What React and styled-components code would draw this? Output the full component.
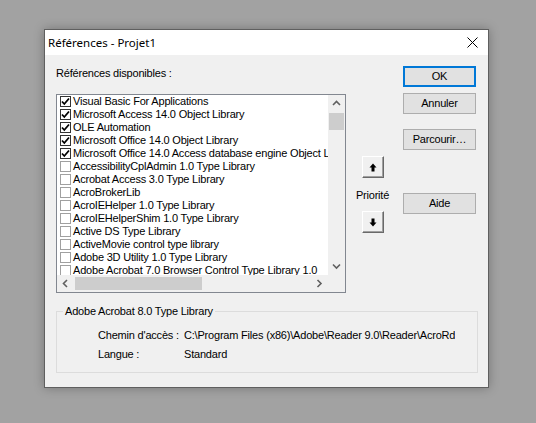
import React from 'react';
import styled, { createGlobalStyle } from 'styled-components';

const GlobalStyle = createGlobalStyle`
  html, body {
    margin: 0;
    padding: 0;
    background: #a2a2a2;
  }
  body {
    font-family: "Liberation Sans", Arial, sans-serif;
    font-size: 11px;
    letter-spacing: -0.2px;
    color: #000;
  }
`;

const Page = styled.div`
  width: 536px;
  height: 423px;
  padding: 29px 0 0 44px;
  box-sizing: border-box;
`;

const Dialog = styled.div`
  width: 445px;
  height: 359px;
  box-sizing: border-box;
  border: 1px solid #5f5f5f;
  background: #f0f0f0;
  box-shadow: 0 0 10px rgba(0, 0, 0, 0.28);
  display: flex;
  flex-direction: column;
`;

const TitleBar = styled.div`
  height: 25px;
  background: #fff;
  display: flex;
  align-items: center;
  justify-content: space-between;
  padding: 0 10px 0 3px;
  flex-shrink: 0;
`;

const Title = styled.span`
  font-family: "Noto Sans", "Open Sans", sans-serif;
  font-size: 11.5px;
  letter-spacing: 0;
  line-height: 15px;
  margin-top: -1px;
`;

const CloseIcon = styled.svg`
  width: 11px;
  height: 11px;
  display: block;
`;

const Body = styled.div`
  padding: 0 10px 0 11px;
`;

const Top = styled.div`
  display: flex;
`;

const LeftCol = styled.div`
  width: 290px;
  padding-top: 11px;
`;

const Label = styled.div`
  line-height: 15px;
  height: 15px;
  white-space: nowrap;
`;

const ListBox = styled.div`
  margin-top: 13px;
  height: 199px;
  box-sizing: border-box;
  border: 1px solid #828790;
  background: #fff;
  display: grid;
  grid-template-columns: 1fr 17px;
  grid-template-rows: 1fr 17px;
  overflow: hidden;
`;

const Items = styled.div`
  overflow: hidden;
  padding: 0 0 0 3px;
`;

const Item = styled.div`
  height: 13px;
  line-height: 13px;
  display: flex;
  align-items: center;
  white-space: nowrap;
`;

const Check = styled.span`
  width: 11px;
  height: 11px;
  box-sizing: border-box;
  border: 1px solid ${(p) => (p.$on ? '#333' : '#a0a0a0')};
  background: #fff;
  margin-right: 2px;
  flex-shrink: 0;
  display: flex;
  align-items: center;
  justify-content: center;
`;

const ItemText = styled.span`
  line-height: 13px;
`;

const VScroll = styled.div`
  background: #f0f0f0;
  display: flex;
  flex-direction: column;
`;

const HScroll = styled.div`
  background: #f0f0f0;
  display: flex;
  align-items: stretch;
`;

const Corner = styled.div`
  background: #f0f0f0;
`;

const Arrow = styled.div`
  width: 17px;
  height: 17px;
  flex-shrink: 0;
  display: flex;
  align-items: center;
  justify-content: center;
`;

const VThumb = styled.div`
  margin: 1px 1px 0;
  height: 17px;
  background: #cdcdcd;
`;

const Track = styled.div`
  flex: 1;
`;

const HThumb = styled.div`
  margin: 2px 0 2px 1px;
  width: 127px;
  background: #cdcdcd;
`;

const MidCol = styled.div`
  width: 57px;
  padding-top: 101px;
  padding-right: 4px;
  box-sizing: border-box;
  display: flex;
  flex-direction: column;
  align-items: center;
`;

const MoveButton = styled.div`
  width: 22px;
  height: 22px;
  box-sizing: border-box;
  background: #f0f0f0;
  border: 1px solid;
  border-color: #fff #696969 #696969 #fff;
  box-shadow: inset -1px -1px 0 #a0a0a0;
  display: flex;
  align-items: center;
  justify-content: center;
  margin-top: ${(p) => p.$gap || 0}px;
`;

const Priority = styled.div`
  margin-top: 10px;
  line-height: 15px;
`;

const RightCol = styled.div`
  width: 73px;
  padding-top: 11px;
  display: flex;
  flex-direction: column;
`;

const Button = styled.div`
  height: 21px;
  box-sizing: border-box;
  background: #e1e1e1;
  border: ${(p) => (p.$default ? '2px solid #0078d7' : '1px solid #adadad')};
  display: flex;
  align-items: center;
  justify-content: center;
  line-height: 15px;
  margin-top: ${(p) => p.$gap || 0}px;
`;

const Group = styled.fieldset`
  margin: 11px 0 0;
  width: 422px;
  box-sizing: border-box;
  border: 1px solid #dcdcdc;
  padding: 9px 0 6px 6px;
  min-width: 0;
`;

const Legend = styled.legend`
  padding: 0 2px;
  line-height: 15px;
`;

const Info = styled.div`
  padding-left: 35px;
`;

const InfoRow = styled.div`
  display: flex;
  height: 19px;
  line-height: 15px;
  white-space: nowrap;
`;

const InfoLabel = styled.span`
  width: 86px;
  flex-shrink: 0;
`;

const InfoValue = styled.span`
  width: 271px;
  overflow: hidden;
`;

const items = [
  ['Visual Basic For Applications', true],
  ['Microsoft Access 14.0 Object Library', true],
  ['OLE Automation', true],
  ['Microsoft Office 14.0 Object Library', true],
  ['Microsoft Office 14.0 Access database engine Object Library', true],
  ['AccessibilityCplAdmin 1.0 Type Library', false],
  ['Acrobat Access 3.0 Type Library', false],
  ['AcroBrokerLib', false],
  ['AcroIEHelper 1.0 Type Library', false],
  ['AcroIEHelperShim 1.0 Type Library', false],
  ['Active DS Type Library', false],
  ['ActiveMovie control type library', false],
  ['Adobe 3D Utility 1.0 Type Library', false],
  ['Adobe Acrobat 7.0 Browser Control Type Library 1.0', false],
  ['Adobe Acrobat 8.0 Type Library', false],
];

const Tick = () => (
  <svg width="9" height="9" viewBox="0 0 9 9">
    <path d="M1 4.5 L3.3 7 L8 1.5" fill="none" stroke="#000" strokeWidth="1.8" />
  </svg>
);

const Chevron = ({ dir }) => {
  const paths = {
    up: 'M1 5 L4.5 1.5 L8 5',
    down: 'M1 1.5 L4.5 5 L8 1.5',
    left: 'M5 1 L1.5 4.5 L5 8',
    right: 'M1.5 1 L5 4.5 L1.5 8',
  };
  const vertical = dir === 'up' || dir === 'down';
  return (
    <svg
      width={vertical ? 9 : 7}
      height={vertical ? 7 : 9}
      viewBox={vertical ? '0 0 9 7' : '0 0 7 9'}
    >
      <path d={paths[dir]} fill="none" stroke="#606060" strokeWidth="1.6" />
    </svg>
  );
};

const BlackArrow = ({ down }) => (
  <svg width="8" height="9" viewBox="0 0 8 9" style={down ? { transform: 'rotate(180deg)' } : undefined}>
    <path d="M4 0.5 L7.5 4.5 L5.5 4.5 L5.5 8.5 L2.5 8.5 L2.5 4.5 L0.5 4.5 Z" fill="#000" />
  </svg>
);

export default function App() {
  return (
    <>
      <GlobalStyle />
      <Page>
        <Dialog>
          <TitleBar>
            <Title>Références - Projet1</Title>
            <CloseIcon viewBox="0 0 11 11">
              <path d="M0.5 0.5 L10.5 10.5 M10.5 0.5 L0.5 10.5" stroke="#000" strokeWidth="1" />
            </CloseIcon>
          </TitleBar>
          <Body>
            <Top>
              <LeftCol>
                <Label>Références disponibles :</Label>
                <ListBox>
                  <Items>
                    {items.map(([name, on]) => (
                      <Item key={name}>
                        <Check $on={on}>{on && <Tick />}</Check>
                        <ItemText>{name}</ItemText>
                      </Item>
                    ))}
                  </Items>
                  <VScroll>
                    <Arrow>
                      <Chevron dir="up" />
                    </Arrow>
                    <VThumb />
                    <Track />
                    <Arrow>
                      <Chevron dir="down" />
                    </Arrow>
                  </VScroll>
                  <HScroll>
                    <Arrow>
                      <Chevron dir="left" />
                    </Arrow>
                    <HThumb />
                    <Track />
                    <Arrow>
                      <Chevron dir="right" />
                    </Arrow>
                  </HScroll>
                  <Corner />
                </ListBox>
              </LeftCol>
              <MidCol>
                <MoveButton>
                  <BlackArrow />
                </MoveButton>
                <Priority>Priorité</Priority>
                <MoveButton $gap={8}>
                  <BlackArrow down />
                </MoveButton>
              </MidCol>
              <RightCol>
                <Button $default>OK</Button>
                <Button $gap={6}>Annuler</Button>
                <Button $gap={15}>Parcourir…</Button>
                <Button $gap={43}>Aide</Button>
              </RightCol>
            </Top>
            <Group>
              <Legend>Adobe Acrobat 8.0 Type Library</Legend>
              <Info>
                <InfoRow>
                  <InfoLabel>Chemin d'accès :</InfoLabel>
                  <InfoValue>C:\Program Files (x86)\Adobe\Reader 9.0\Reader\AcroRd32.dll</InfoValue>
                </InfoRow>
                <InfoRow>
                  <InfoLabel>Langue :</InfoLabel>
                  <InfoValue>Standard</InfoValue>
                </InfoRow>
              </Info>
            </Group>
          </Body>
        </Dialog>
      </Page>
    </>
  );
}
